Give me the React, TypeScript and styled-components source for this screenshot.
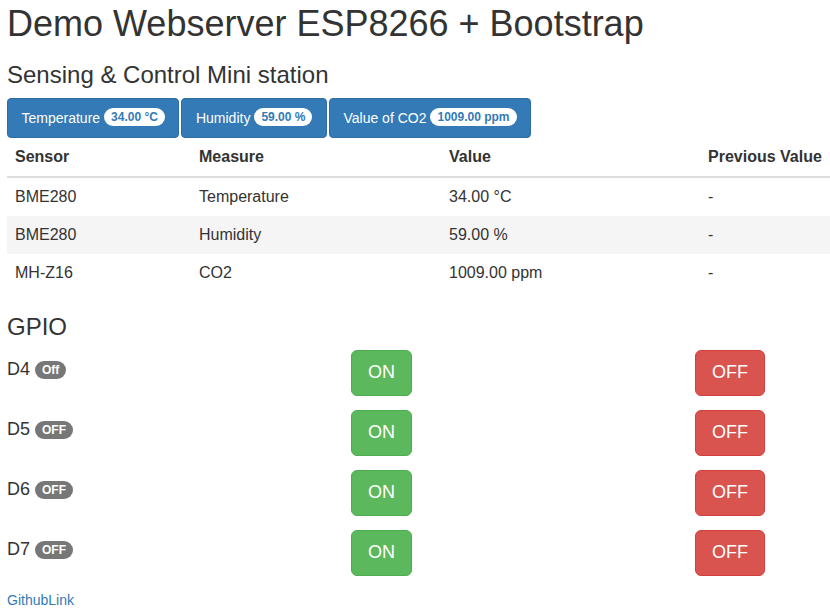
import React from "react";
import styled, { createGlobalStyle } from "styled-components";

const Global = createGlobalStyle`
  html, body { margin: 0; padding: 0; background: #fff; overflow-x: hidden; }
  body {
    font-family: "Liberation Sans", Arial, Helvetica, sans-serif;
    font-size: 14px;
    line-height: 1.42857;
    color: #333;
  }
`;

const Page = styled.div`
  padding: 0 0 0 7px;
`;

const Title = styled.h1`
  margin: 4px 0 0;
  font-size: 36px;
  font-weight: 500;
  line-height: 1.1;
`;

const Heading = styled.h3`
  margin: 18px 0 10px;
  font-size: 24px;
  font-weight: 500;
  line-height: 1.1;
`;

const ButtonBar = styled.div`
  display: flex;
  gap: 2px;
`;

const InfoButton = styled.button`
  display: inline-flex;
  align-items: center;
  gap: 4px;
  height: 40px;
  padding: 0 13.5px;
  font-family: inherit;
  font-size: 14px;
  color: #fff;
  background: #337ab7;
  border: 1px solid #2e6da4;
  border-radius: 4px;
`;

const Badge = styled.span<{ $light?: boolean }>`
  display: inline-block;
  min-width: 10px;
  padding: 3px 7px;
  font-size: 12px;
  font-weight: 700;
  line-height: 1;
  text-align: center;
  white-space: nowrap;
  border-radius: 10px;
  color: ${(p) => (p.$light ? "#337ab7" : "#fff")};
  background: ${(p) => (p.$light ? "#fff" : "#777")};
  position: relative;
  top: ${(p) => (p.$light ? "-1px" : "0")};
`;

const Table = styled.table`
  width: 100%;
  border-collapse: collapse;
  border-spacing: 0;
  margin-bottom: 22px;
  font-size: 16px;
  line-height: 22px;
`;

const Th = styled.th<{ $w?: number }>`
  text-align: left;
  font-weight: 700;
  padding: 8px;
  border-bottom: 2px solid #ddd;
  width: ${(p) => (p.$w ? `${p.$w}px` : "auto")};
  white-space: nowrap;
`;

const Tr = styled.tr<{ $shade?: boolean }>`
  background: ${(p) => (p.$shade ? "#f5f5f5" : "transparent")};
  & + & td { border-top: 1px solid #ddd; }
`;

const Td = styled.td`
  padding: 8px;
`;

const GpioHeading = styled(Heading)`
  margin-top: 20px;
`;

const GpioGrid = styled.div`
  display: grid;
  grid-template-columns: 344px 344px 1fr;
  row-gap: 14px;
`;

const PinLabel = styled.h4`
  margin: 10px 0 0;
  font-size: 18px;
  font-weight: 500;
  line-height: 1.1;
  display: flex;
  align-items: center;
  gap: 5px;
  height: 20px;
`;

const BigButton = styled.button<{ $kind: "on" | "off" }>`
  justify-self: start;
  height: 46px;
  padding: 0 16px;
  font-family: inherit;
  font-size: 18px;
  line-height: 1.3333;
  color: #fff;
  border-radius: 6px;
  background: ${(p) => (p.$kind === "on" ? "#5cb85c" : "#d9534f")};
  border: 1px solid ${(p) => (p.$kind === "on" ? "#4cae4c" : "#d43f3a")};
`;

const Footer = styled.div`
  margin-top: 14px;
  line-height: 20px;
`;

const Link = styled.a`
  color: #337ab7;
  text-decoration: none;
`;

const sensors = [
  { sensor: "BME280", measure: "Temperature", value: "34.00 °C" },
  { sensor: "BME280", measure: "Humidity", value: "59.00 %" },
  { sensor: "MH-Z16", measure: "CO2", value: "1009.00 ppm" },
];

const pins = [
  { name: "D4", state: "Off" },
  { name: "D5", state: "OFF" },
  { name: "D6", state: "OFF" },
  { name: "D7", state: "OFF" },
];

export default function App() {
  return (
    <Page>
      <Global />
      <Title>Demo Webserver ESP8266 + Bootstrap</Title>
      <Heading>Sensing &amp; Control Mini station</Heading>
      <ButtonBar>
        <InfoButton>
          Temperature <Badge $light>34.00 °C</Badge>
        </InfoButton>
        <InfoButton>
          Humidity <Badge $light>59.00 %</Badge>
        </InfoButton>
        <InfoButton>
          Value of CO2 <Badge $light>1009.00 ppm</Badge>
        </InfoButton>
      </ButtonBar>
      <Table>
        <thead>
          <tr>
            <Th $w={168}>Sensor</Th>
            <Th $w={234}>Measure</Th>
            <Th $w={243}>Value</Th>
            <Th>Previous Value</Th>
          </tr>
        </thead>
        <tbody>
          {sensors.map((s, i) => (
            <Tr key={i} $shade={i === 1}>
              <Td>{s.sensor}</Td>
              <Td>{s.measure}</Td>
              <Td>{s.value}</Td>
              <Td>-</Td>
            </Tr>
          ))}
        </tbody>
      </Table>
      <GpioHeading>GPIO</GpioHeading>
      <GpioGrid>
        {pins.map((p) => (
          <React.Fragment key={p.name}>
            <PinLabel>
              {p.name} <Badge>{p.state}</Badge>
            </PinLabel>
            <BigButton $kind="on">ON</BigButton>
            <BigButton $kind="off">OFF</BigButton>
          </React.Fragment>
        ))}
      </GpioGrid>
      <Footer>
        <Link href="#">GithubLink</Link>
      </Footer>
    </Page>
  );
}
